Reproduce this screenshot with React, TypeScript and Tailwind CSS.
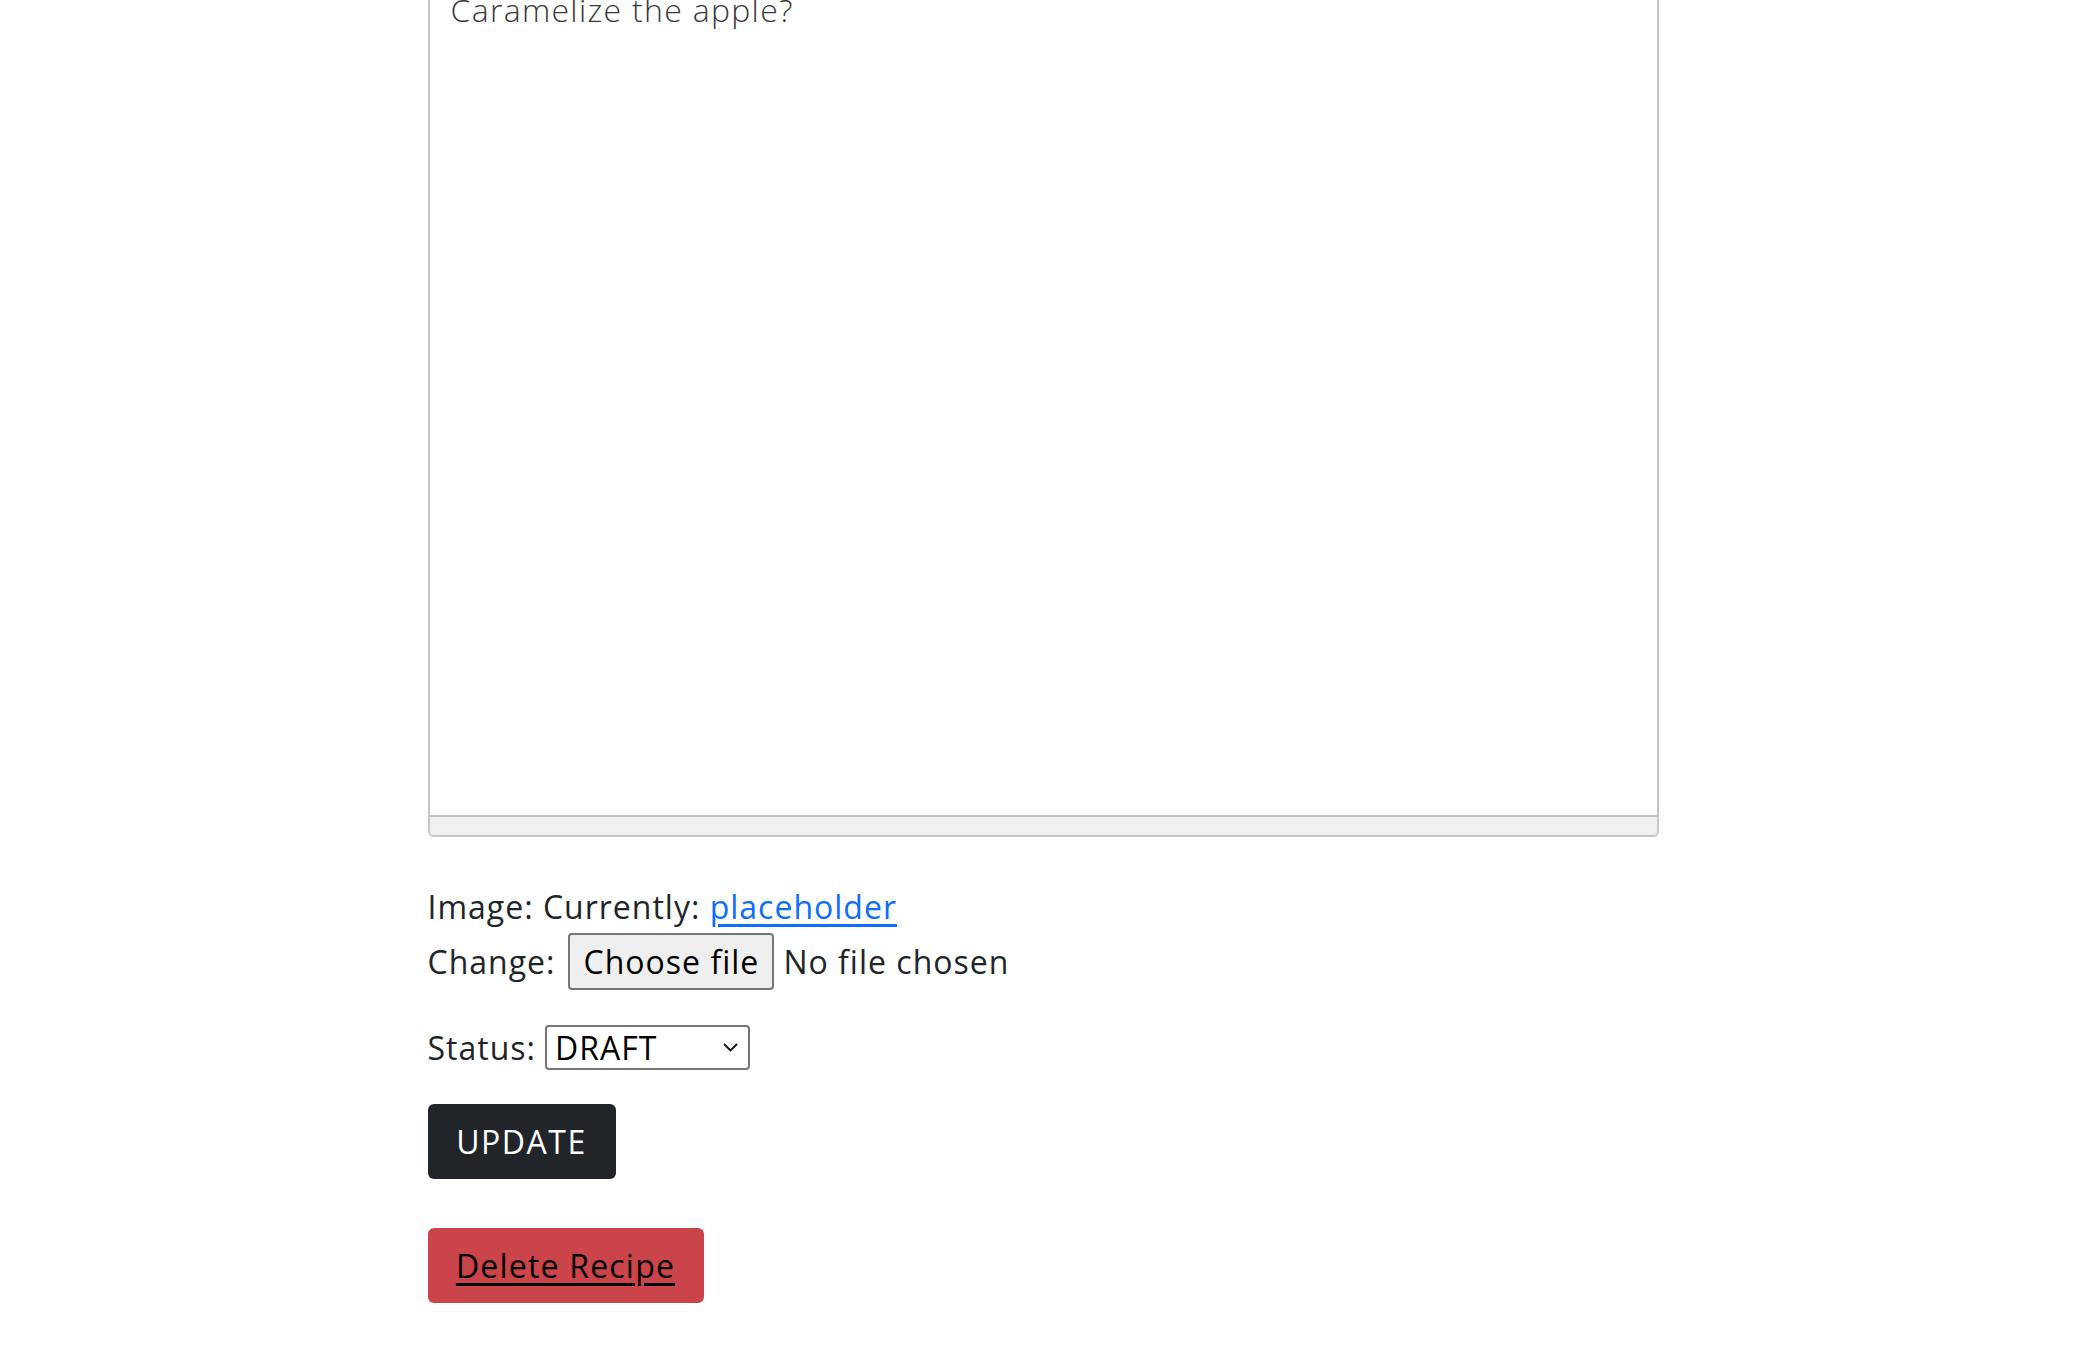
const font = { fontFamily: '"Open Sans", "Liberation Sans", sans-serif' };

const App = () => {
    return (
        <div className="min-h-screen bg-white text-[#212529] overflow-hidden" style={font}>
            <div className="mx-auto w-[1231px]">
                {/* Instructions textarea (scrolled past its top) */}
                <div className="mt-[-40px] border-x-2 border-b-2 border-[#c6c6c6] rounded-b-[6px] overflow-hidden">
                    <div className="h-[855px] pt-[30px] px-[21px] text-[32px] leading-[40px] font-light tracking-[1.3px] text-[#3a3a3a]">
                        Caramelize the apple?
                    </div>
                    <div className="h-[20px] bg-[#f0f0f0] border-t-2 border-[#c2c2c2]"></div>
                </div>

                {/* Image field */}
                <div className="mt-[50px] text-[32px] leading-[40px] tracking-[1px]">
                    Image: Currently: <a href="#" className="text-[#0d6efd] underline underline-offset-[5px]">placeholder</a>
                </div>
                <div className="mt-[6px] flex items-center text-[32px] leading-[40px] tracking-[1px]">
                    <span>Change:</span>
                    <span className="ml-[13px] h-[57px] w-[206px] flex items-center justify-center border-2 border-[#767676] rounded-[4px] bg-[#efefef] text-black">
                        Choose file
                    </span>
                    <span className="ml-[9px]">No file chosen</span>
                </div>

                {/* Status */}
                <div className="mt-[35px] flex items-center text-[32px] leading-[40px] tracking-[1px]">
                    <span>Status:</span>
                    <div className="ml-[9px] h-[45px] w-[205px] flex items-center justify-between border-2 border-[#767676] rounded-[4px] pl-[8px] pr-[10px] text-black">
                        <span>DRAFT</span>
                        <svg width="15" height="9" viewBox="0 0 15 9" fill="none" stroke="#111" strokeWidth="1.8">
                            <path d="M1 1l6.5 6.5L14 1" />
                        </svg>
                    </div>
                </div>

                {/* Actions */}
                <button className="mt-[34px] block h-[75px] w-[188px] rounded-[6px] bg-[#212529] text-white text-[32px] tracking-[1.5px]">
                    UPDATE
                </button>
                <button className="mt-[49px] block h-[75px] w-[276px] rounded-[6px] bg-[#cb444a] text-black text-[32px] tracking-[1.2px] underline underline-offset-[5px]">
                    Delete Recipe
                </button>
            </div>
        </div>
    );
};

export default App;
